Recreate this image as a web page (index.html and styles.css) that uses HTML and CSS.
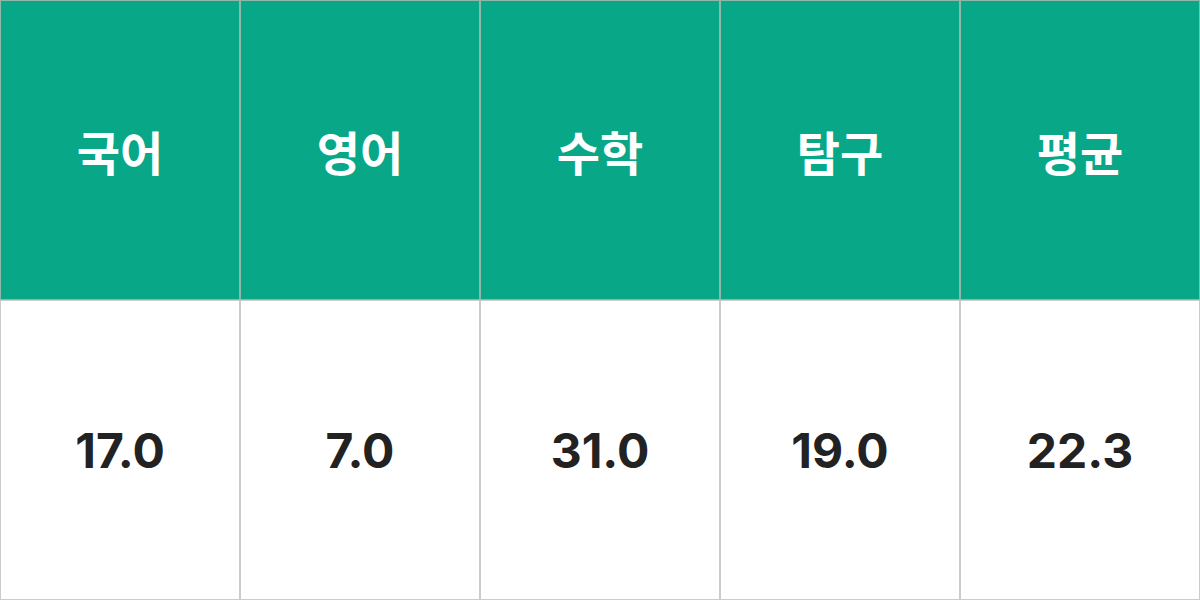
FILE: index.html
```html
<!DOCTYPE html>
<html lang="ko">
<head>
<meta charset="utf-8">
<link rel="stylesheet" href="styles.css">
</head>
<body>
<table class="score-table">
  <thead>
    <tr>
      <th>국어</th>
      <th>영어</th>
      <th>수학</th>
      <th>탐구</th>
      <th>평균</th>
    </tr>
  </thead>
  <tbody>
    <tr>
      <td>17.0</td>
      <td>7.0</td>
      <td>31.0</td>
      <td>19.0</td>
      <td>22.3</td>
    </tr>
  </tbody>
</table>
</body>
</html>
```
FILE: styles.css
```css
html, body {
  margin: 0;
  padding: 0;
  background: #ffffff;
}
.score-table {
  width: 1200px;
  height: 600px;
  border-collapse: separate;
  border-spacing: 0;
  table-layout: fixed;
  font-family: Inter, "Noto Sans CJK KR", sans-serif;
}
.score-table th,
.score-table td {
  height: 300px;
  padding: 0;
  text-align: center;
  vertical-align: middle;
  box-sizing: border-box;
}
.score-table th {
  border: 1px solid #8db9ab;
  background: #08a788;
  color: #ffffff;
  font-family: "Noto Sans CJK KR", sans-serif;
  font-size: 47px;
  font-weight: 700;
}
.score-table td {
  border: 1px solid #cccccc;
  color: #222222;
  font-size: 48px;
  font-weight: 700;
}
```
